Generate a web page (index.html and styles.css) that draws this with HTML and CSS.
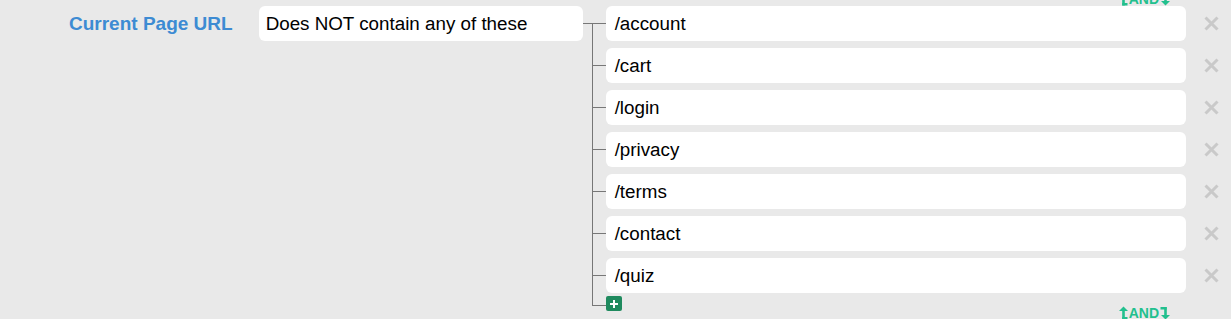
FILE: index.html
```html
<!DOCTYPE html>
<html>

<head>
    <meta charset="utf-8">
    <meta name="viewport" content="width=device-width, initial-scale=1.0">
    <title>Targeting rules</title>
    <link rel="stylesheet" href="styles.css">
</head>

<body>
    <div class="rule-page">
        <div class="and-link">
            <svg class="arrow-up" width="9" height="14" viewBox="0 0 9 14">
                <polygon points="0,5 4.5,0.5 9,5" />
                <rect x="3.2" y="4" width="2.6" height="9.5" />
                <rect x="3.2" y="11" width="5.3" height="2.5" />
            </svg>
            <span>AND</span>
            <svg class="arrow-down" width="10" height="14" viewBox="0 0 10 14">
                <rect x="0.5" y="1" width="6" height="2.5" />
                <rect x="4.2" y="1" width="2.6" height="9" />
                <polygon points="1,9 5.5,13.5 10,9" />
            </svg>
        </div>

        <div class="condition">
            <div class="field-name">Current Page URL</div>
            <div class="operator">Does NOT contain any of these</div>
            <div class="value-tree">
                <div class="value-row">
                    <div class="value">/account</div>
                    <button class="remove"><svg width="15" height="15" viewBox="0 0 15 15"><path d="M1.5 1.5 L13.5 13.5 M13.5 1.5 L1.5 13.5" /></svg></button>
                </div>
                <div class="value-row">
                    <div class="value">/cart</div>
                    <button class="remove"><svg width="15" height="15" viewBox="0 0 15 15"><path d="M1.5 1.5 L13.5 13.5 M13.5 1.5 L1.5 13.5" /></svg></button>
                </div>
                <div class="value-row">
                    <div class="value">/login</div>
                    <button class="remove"><svg width="15" height="15" viewBox="0 0 15 15"><path d="M1.5 1.5 L13.5 13.5 M13.5 1.5 L1.5 13.5" /></svg></button>
                </div>
                <div class="value-row">
                    <div class="value">/privacy</div>
                    <button class="remove"><svg width="15" height="15" viewBox="0 0 15 15"><path d="M1.5 1.5 L13.5 13.5 M13.5 1.5 L1.5 13.5" /></svg></button>
                </div>
                <div class="value-row">
                    <div class="value">/terms</div>
                    <button class="remove"><svg width="15" height="15" viewBox="0 0 15 15"><path d="M1.5 1.5 L13.5 13.5 M13.5 1.5 L1.5 13.5" /></svg></button>
                </div>
                <div class="value-row">
                    <div class="value">/contact</div>
                    <button class="remove"><svg width="15" height="15" viewBox="0 0 15 15"><path d="M1.5 1.5 L13.5 13.5 M13.5 1.5 L1.5 13.5" /></svg></button>
                </div>
                <div class="value-row">
                    <div class="value">/quiz</div>
                    <button class="remove"><svg width="15" height="15" viewBox="0 0 15 15"><path d="M1.5 1.5 L13.5 13.5 M13.5 1.5 L1.5 13.5" /></svg></button>
                </div>
                <div class="add-row">
                    <button class="add"><svg width="10" height="10" viewBox="0 0 10 10"><path d="M5 1 V9 M1 5 H9" /></svg></button>
                </div>
            </div>
        </div>

        <div class="and-link bottom">
            <svg class="arrow-up" width="9" height="14" viewBox="0 0 9 14">
                <polygon points="0,5 4.5,0.5 9,5" />
                <rect x="3.2" y="4" width="2.6" height="9.5" />
                <rect x="3.2" y="11" width="5.3" height="2.5" />
            </svg>
            <span>AND</span>
            <svg class="arrow-down" width="10" height="14" viewBox="0 0 10 14">
                <rect x="0.5" y="1" width="6" height="2.5" />
                <rect x="4.2" y="1" width="2.6" height="9" />
                <polygon points="1,9 5.5,13.5 10,9" />
            </svg>
        </div>
    </div>
</body>

</html>
```

FILE: styles.css
```css
* {
    padding: 0;
    margin: 0;
    box-sizing: border-box;
}

body {
    background: #e9e9e9;
    font-family: "Liberation Sans", Arial, sans-serif;
    overflow: hidden;
}

.rule-page {
    margin-top: -8px;
    display: flex;
    flex-direction: column;
}

.and-link {
    display: flex;
    justify-content: flex-end;
    align-items: flex-start;
    height: 14px;
    padding-right: 61px;
    color: #22c08e;
    font-size: 14px;
    line-height: 14px;
    font-weight: bold;
    gap: 1px;
}

.and-link svg {
    fill: #22c08e;
    display: block;
}

.and-link.bottom {
    margin-top: -5px;
}

.condition {
    display: flex;
    align-items: flex-start;
    padding-left: 69px;
}

.field-name {
    height: 35px;
    line-height: 35px;
    font-size: 19px;
    font-weight: bold;
    color: #3d8bd3;
    margin-right: 26px;
    white-space: nowrap;
}

.operator {
    width: 324px;
    height: 35px;
    line-height: 35px;
    padding-left: 7px;
    background: #fff;
    border-radius: 6px;
    font-size: 18.8px;
    color: #000;
}

.value-tree {
    position: relative;
    margin-left: 9px;
    padding-left: 14px;
    display: flex;
    flex-direction: column;
    gap: 7px;
}

/* vertical trunk of the tree */
.value-tree::before {
    content: "";
    position: absolute;
    left: 0;
    top: 18px;
    bottom: 5px;
    border-left: 1px solid #777;
}

.value-row {
    position: relative;
    display: flex;
    align-items: center;
}

.value-row::before,
.add-row::before {
    content: "";
    position: absolute;
    left: -14px;
    width: 14px;
    border-top: 1px solid #777;
}

.value-row::before {
    top: 17px;
}

.value-row:first-child::before {
    left: -23px;
    width: 23px;
}

.value {
    width: 580px;
    height: 35px;
    line-height: 35px;
    padding-left: 9px;
    background: #fff;
    border-radius: 6px;
    font-size: 18.8px;
    color: #000;
}

.remove {
    margin-left: 18px;
    border: none;
    background: none;
    display: flex;
}

.remove svg {
    stroke: #c9c9c9;
    stroke-width: 3;
}

.add-row {
    position: relative;
    margin-top: -4px;
    height: 15px;
}

.add-row::before {
    top: 9px;
}

.add {
    width: 16px;
    height: 15px;
    border: none;
    border-radius: 2px;
    background: #1f8a5e;
    display: flex;
    align-items: center;
    justify-content: center;
}

.add svg {
    stroke: #fff;
    stroke-width: 2;
}
```
